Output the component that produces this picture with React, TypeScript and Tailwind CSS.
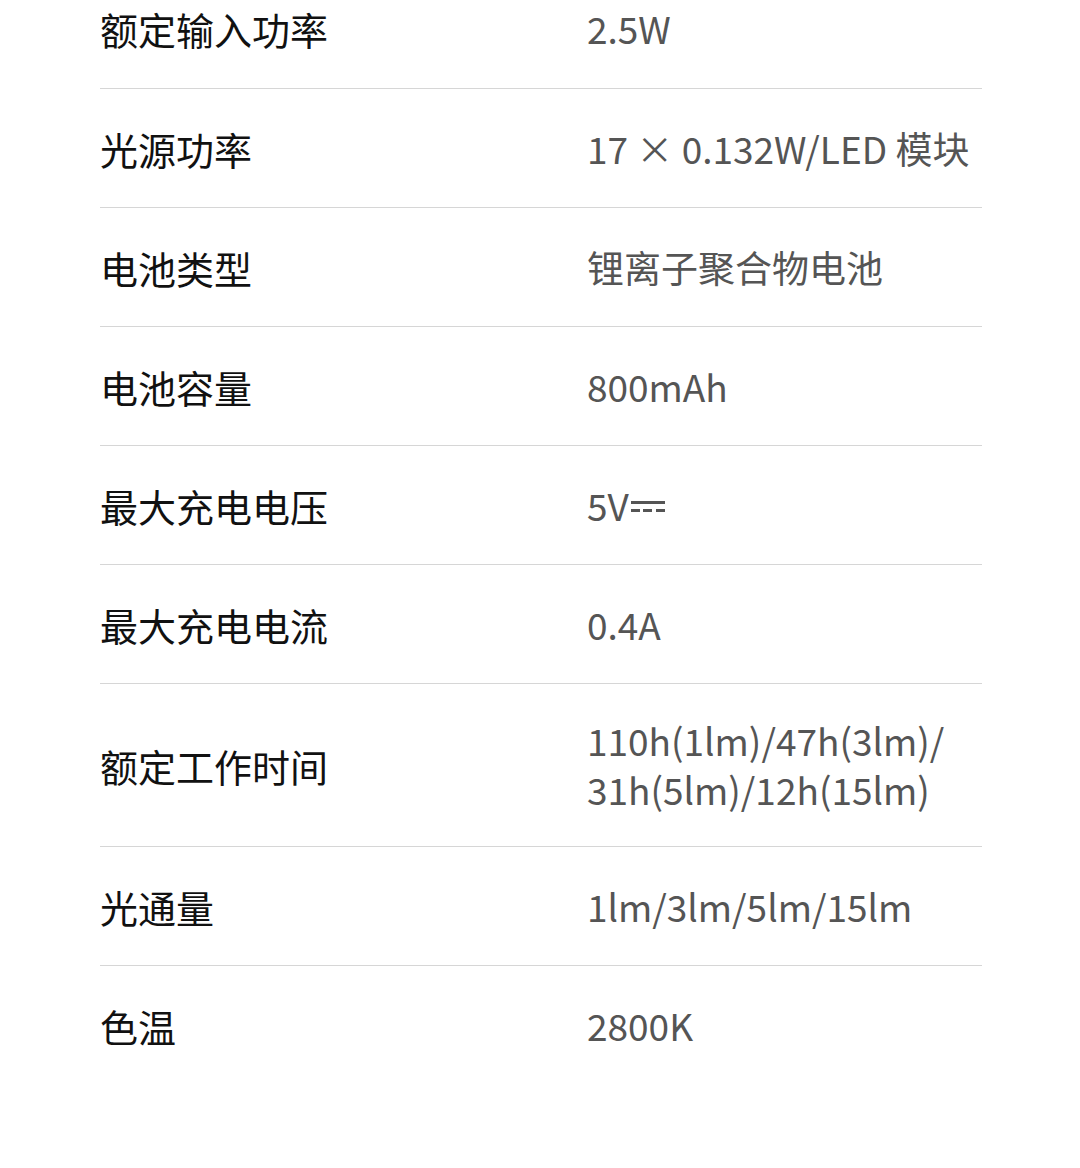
const font = { fontFamily: '"Noto Sans CJK SC", "Noto Sans", sans-serif' }

const specs: [string, React.ReactNode][] = [
  ['光源功率', '17 × 0.132W/LED 模块'],
  ['电池类型', '锂离子聚合物电池'],
  ['电池容量', '800mAh'],
  [
    '最大充电电压',
    <span className="inline-flex items-center">
      5V
      <span className="ml-[2px] inline-flex w-[34px] flex-col gap-[5px] pt-[2px]">
        <span className="block h-[3px] bg-[#555]" />
        <span className="flex h-[3px] justify-between">
          <span className="block w-[9px] bg-[#555]" />
          <span className="block w-[9px] bg-[#555]" />
          <span className="block w-[9px] bg-[#555]" />
        </span>
      </span>
    </span>,
  ],
  ['最大充电电流', '0.4A'],
  [
    '额定工作时间',
    <>
      110h(1lm)/47h(3lm)/
      <br />
      31h(5lm)/12h(15lm)
    </>,
  ],
  ['光通量', '1lm/3lm/5lm/15lm'],
  ['色温', '2800K'],
]

function Row({ label, value, first }: { label: string; value: React.ReactNode; first?: boolean }) {
  return (
    <div
      className={`flex items-center ${first ? '' : 'border-t border-[#d6d6d6]'} ${
        label === '额定工作时间' ? 'min-h-[163px]' : 'min-h-[119px]'
      }`}
    >
      <div className="w-[487px] shrink-0 text-[38px] font-normal text-[#111]">{label}</div>
      <div className="text-[37px] leading-[49px] text-[#555]">{value}</div>
    </div>
  )
}

export default function App() {
  return (
    <div className="h-[1168px] w-[1080px] overflow-hidden bg-white" style={font}>
      <div className="mt-[-31px] ml-[100px] w-[882px]">
        <Row label="额定输入功率" value="2.5W" first />
        {specs.map(([l, v]) => (
          <Row key={l} label={l} value={v} />
        ))}
      </div>
    </div>
  )
}
